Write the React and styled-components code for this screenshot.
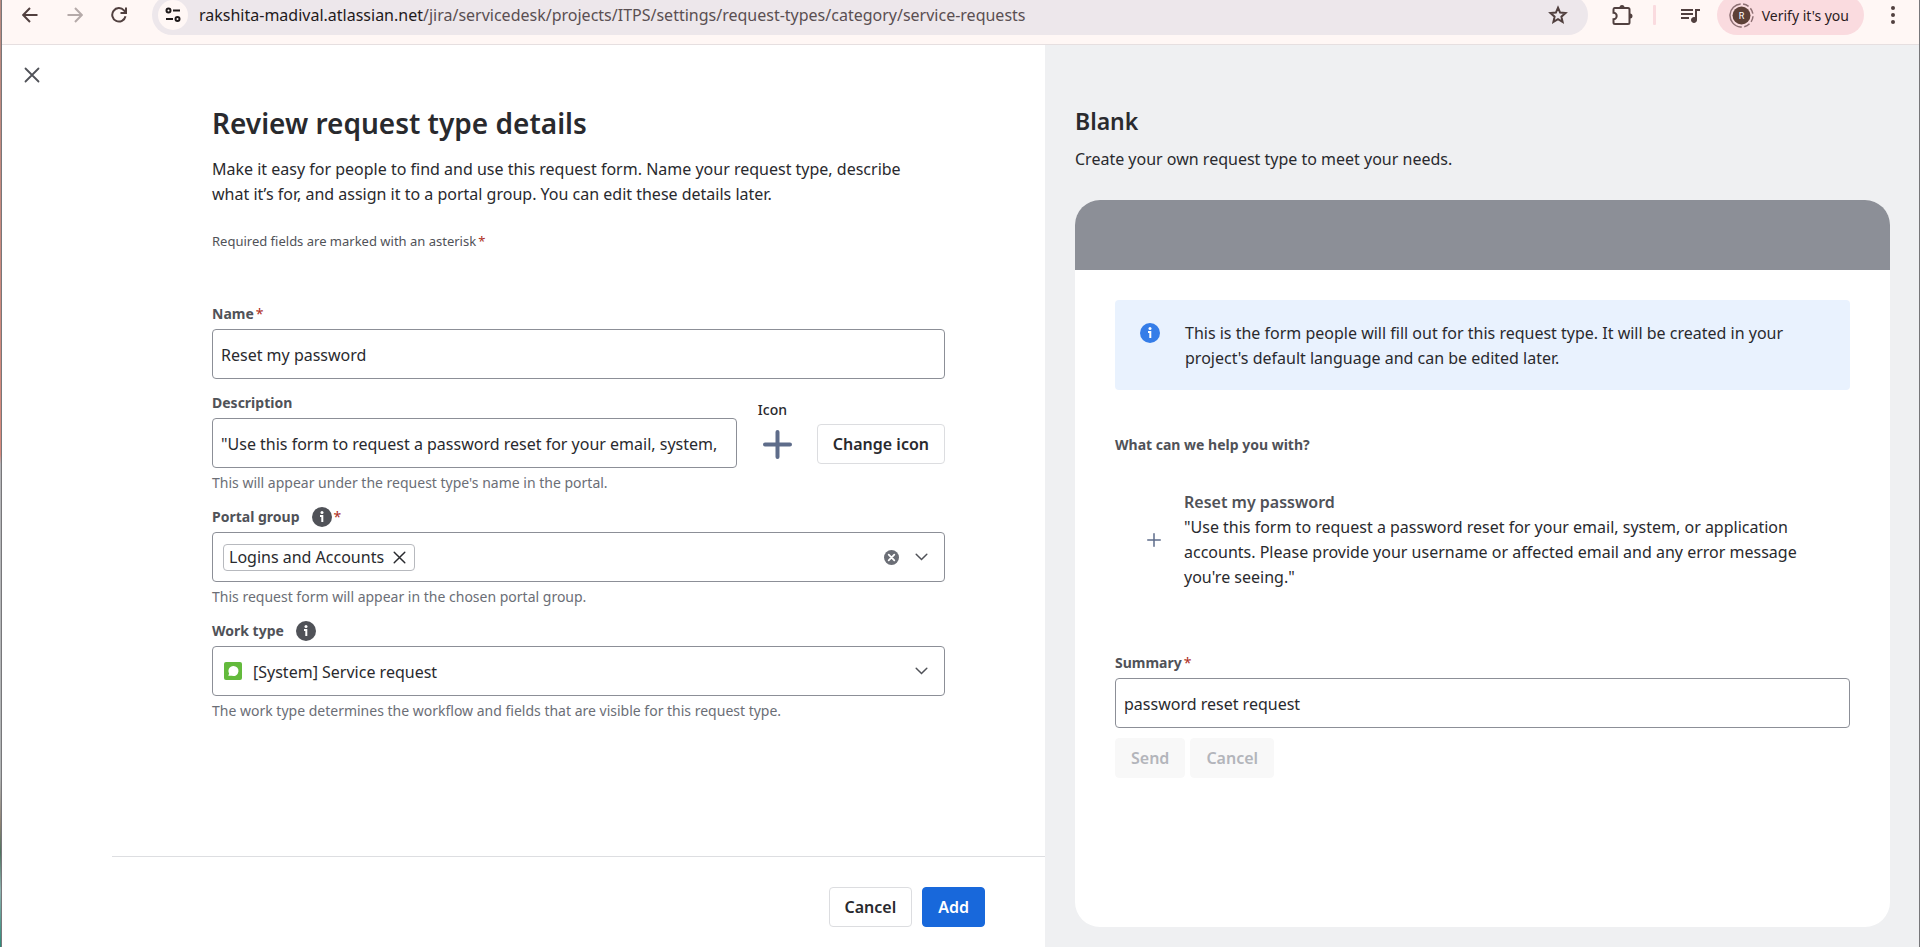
import React, { useState } from "react";
import styled, { createGlobalStyle, css } from "styled-components";

const GlobalStyle = createGlobalStyle`
  *, *::before, *::after { box-sizing: border-box; }
  html, body, #root { height: 100%; }
  body {
    margin: 0;
    color: #292a2e;
    font: 400 16px/25px "Noto Sans", "Open Sans", sans-serif;
  }
  button, input, select { font: inherit; color: inherit; }
  h1, h2, p { margin: 0; }
  svg { display: block; flex: none; }
`;

/* ---------- window frame ---------- */

const Desktop = styled.div`
  min-height: 100%;
  display: flex;
  padding-left: 1px;
  background: linear-gradient(#b98a80 0%, #d8897c 48%, #b5b5b8 49%, #b0b3b4 82%, #8f8272 87%, #4f7560 90%, #8fb3b1 94%, #2c8a78 100%);
`;

const Window = styled.div`
  flex: 1;
  min-width: 0;
  display: flex;
  flex-direction: column;
  border: solid #77777a;
  border-width: 0 1px;
  background: #fff;
  overflow: hidden;
`;

const Toolbar = styled.header`
  display: flex;
  align-items: center;
  height: 45px;
  padding: 0 0 14px 1px;
  border-bottom: 1px solid #e6dfe0;
  background: #fff7f5;
  color: #51403f;
`;

const IconButton = styled.button`
  flex: none;
  display: grid;
  place-items: center;
  width: ${(p) => p.$size || 46}px;
  height: ${(p) => p.$height || 30}px;
  padding: 0;
  border: 0;
  background: none;
  color: ${(p) => p.$color || "inherit"};
`;

const AddressBar = styled.div`
  flex: 1;
  display: flex;
  align-items: center;
  height: 40px;
  margin: 0 8px 0 7px;
  padding: 0 7px 0 6px;
  border-radius: 20px;
  background: #ede7eb;
`;

const SiteInfo = styled(IconButton)`
  border-radius: 50%;
  background: #fff7f5;
  color: #1f1a1b;
`;

const Address = styled.div`
  flex: 1;
  padding-left: 11px;
  color: #5a4f52;
  white-space: nowrap;
`;

const Host = styled.span`
  color: #1f1a1b;
`;

const Divider = styled.span`
  width: 3px;
  height: 20px;
  margin: 0 11px 0 5px;
  border-radius: 1px;
  background: #fadbdf;
`;

const ProfileButton = styled.button`
  display: flex;
  align-items: center;
  gap: 8px;
  height: 40px;
  margin: 0 3px 0 4px;
  padding: 0 15px 0 12px;
  border: 0;
  border-radius: 20px;
  background: #fadbdf;
  color: #2b1b1e;
  font-size: 14px;
  white-space: nowrap;
`;

/* ---------- page panels ---------- */

const Columns = styled.main`
  flex: 1;
  display: grid;
  grid-template-columns: 1043fr 874fr;
`;

const EditPanel = styled.section`
  display: grid;
  grid-template-columns: 110px 1fr;
  min-width: 0;
`;

const CloseCell = styled.div`
  padding: 15px;
`;

const EditBody = styled.div`
  display: flex;
  flex-direction: column;
  min-width: 0;
`;

const Form = styled.form`
  flex: 1;
  display: flex;
  flex-direction: column;
  padding: 61px 100px 30px;
`;

const Title = styled.h1`
  font-size: 28px;
  line-height: 35px;
  font-weight: 600;
`;

const Intro = styled.p`
  max-width: 720px;
  margin-top: 16px;
`;

const RequiredNote = styled.p`
  margin: 24px 0 53px;
  color: #505258;
  font-size: 13px;
  line-height: 20px;
`;

const Star = styled.span`
  margin-left: 2px;
  color: #ae2e24;
  font-weight: 400;
`;

const Fields = styled.div`
  display: flex;
  flex-direction: column;
  gap: 14px;
`;

const Field = styled.div`
  flex: 1;
  min-width: 0;
`;

const LabelRow = styled.div`
  display: flex;
  align-items: center;
  height: 20px;
  margin-bottom: 5px;
  color: #505258;
  font-size: 14px;
  line-height: 20px;
  font-weight: 700;
`;

const InfoDot = styled.span`
  margin-left: 12px;
`;

const boxStyle = css`
  width: 100%;
  height: 50px;
  border: 1px solid #8c8f97;
  border-radius: 4px;
  background: #fff;
`;

const TextInput = styled.input`
  ${boxStyle}
  padding: 2px 16px 0 8px;
`;

const Help = styled.p`
  margin-top: 5px;
  color: #6b6e76;
  font-size: 14px;
  line-height: 20px;
`;

const DescriptionRow = styled.div`
  display: flex;
  gap: 21px;
`;

const IconPicker = styled.div`
  padding-top: 7px;
`;

const IconCaption = styled.div`
  margin-bottom: 4px;
  font-size: 14px;
  line-height: 20px;
  font-weight: 500;
`;

const IconPickerRow = styled.div`
  display: flex;
  gap: 20px;
`;

const IconPreview = styled.span`
  display: grid;
  place-items: center;
  width: 39px;
  height: 40px;
`;

const Button = styled.button`
  height: 40px;
  padding: 0 15px;
  border: 1px solid ${(p) => (p.$primary ? "#1868db" : "#dcdde0")};
  border-radius: 4px;
  background: ${(p) => (p.$primary ? "#1868db" : "#fff")};
  color: ${(p) => (p.$primary ? "#fff" : "#292a2e")};
  font-weight: 600;
  white-space: nowrap;

  &:disabled {
    border-color: #f8f8f8;
    background: #f8f8f8;
    color: #b3b5bb;
  }
`;

const TagBox = styled.div`
  ${boxStyle}
  display: flex;
  align-items: center;
  padding: 0 8px 0 10px;
`;

const Tag = styled.span`
  display: flex;
  align-items: center;
  height: 27px;
  padding: 0 0 0 5px;
  border: 1px solid #b7b9be;
  border-radius: 4px;
  white-space: nowrap;
`;

const TagSearch = styled.input`
  flex: 1;
  min-width: 0;
  padding: 0 4px;
  border: 0;
  outline: 0;
  background: none;
`;

const SelectWrap = styled.div`
  position: relative;
`;

const Select = styled.select`
  ${boxStyle}
  appearance: none;
  padding: 2px 40px 0;
`;

const SelectIcon = styled.span`
  position: absolute;
  top: 16px;
  left: 12px;
  pointer-events: none;
`;

const SelectArrow = styled.span`
  position: absolute;
  top: 10px;
  right: 9px;
  display: grid;
  place-items: center;
  width: 30px;
  height: 30px;
  color: #505258;
  pointer-events: none;
`;

const Footer = styled.footer`
  display: flex;
  justify-content: flex-end;
  gap: 10px;
  padding: 30px 60px 20px;
  border-top: 1px solid #dddee1;
`;

/* ---------- preview ---------- */

const Preview = styled.aside`
  display: flex;
  flex-direction: column;
  min-width: 0;
  padding: 61px 29px 20px 30px;
  background: #eff0f2;
`;

const PreviewTitle = styled.h2`
  font-size: 23px;
  line-height: 30px;
  font-weight: 600;
`;

const PreviewText = styled.p`
  margin: 11px 0 28px;
`;

const Card = styled.div`
  flex: 1;
  border-radius: 25px;
  background: #fff;
  overflow: hidden;
`;

const CardBanner = styled.div`
  height: 70px;
  background: #8c8f97;
`;

const CardBody = styled.div`
  padding: 30px 40px;
`;

const Notice = styled.div`
  display: flex;
  gap: 25px;
  padding: 21px 25px 19px;
  border-radius: 4px;
  background: #e9f2fe;
`;

const NoticeIcon = styled.span`
  padding-top: 2px;
`;

const Question = styled.p`
  margin: 45px 0 35px;
  color: #505258;
  font-size: 14px;
  line-height: 20px;
  font-weight: 700;
`;

const RequestType = styled.div`
  display: flex;
  align-items: center;
  gap: 23px;
  margin-bottom: 63px;
  padding: 0 30px 0 32px;
`;

const RequestName = styled.div`
  color: #505258;
  font-weight: 600;
`;

const Actions = styled.div`
  display: flex;
  gap: 5px;
  margin-top: 10px;
`;

/* ---------- icons ---------- */

const stroke = { fill: "none", stroke: "currentColor" };

const BackIcon = () => (
  <svg width="16" height="16" viewBox="0 0 16 16" {...stroke} strokeWidth="2">
    <path d="M15.500 8H1.500M8 1L1.200 8L8 15" />
  </svg>
);
const ForwardIcon = () => (
  <svg width="16" height="16" viewBox="0 0 16 16" {...stroke} strokeWidth="2">
    <path d="M.5 8h14M8 1l6.800 7L8 15" />
  </svg>
);
const ReloadIcon = () => (
  <svg width="16" height="16" viewBox="0 0 16 16" {...stroke} strokeWidth="2">
    <path d="M14.500 9.200A6.700 6.700 0 1 1 13 3.400L14.800 5.600M15 .5V6H9.500" />
  </svg>
);
const TuneIcon = () => (
  <svg width="16" height="16" viewBox="0 0 16 16" {...stroke} strokeWidth="2">
    <circle cx="3.500" cy="3.500" r="2" />
    <circle cx="12.500" cy="12" r="2" />
    <path d="M8 3.500h7M1 12h7" />
  </svg>
);
const StarIcon = () => (
  <svg width="20" height="20" viewBox="0 0 20 20" {...stroke} strokeWidth="2">
    <path d="M10 2.700l2.100 4.900 5.400.5-4.100 3.600 1.200 5.200L10 14.100l-4.600 2.800 1.200-5.200L2.500 8.100l5.400-.5z" />
  </svg>
);
const PuzzleIcon = () => (
  <svg width="22" height="22" viewBox="0 0 22 22" {...stroke} strokeWidth="2">
    <path d="M3.500 4h13.500q1.500 0 1.500 1.500v13q0 1.500-1.500 1.500H4q-1.500 0-1.500-1.500v-3.300a3 3 0 0 0 0-6.400V5.500Q2.500 4 3.500 4z" />
    <path d="M8.500 3.500a2.500 2.500 0 0 1 5 0zM19 9.500a2.500 2.500 0 0 1 0 5z" fill="currentColor" stroke="none" />
  </svg>
);
const QueueIcon = () => (
  <svg width="24" height="24" viewBox="0 0 24 24" fill="currentColor">
    <path d="M15 6H3v2h12V6zm0 4H3v2h12v-2zM3 16h8v-2H3v2zM17 6v8.180c-.31-.11-.65-.18-1-.18-1.660 0-3 1.340-3 3s1.340 3 3 3 3-1.340 3-3V8h3V6h-5z" />
  </svg>
);
const Avatar = () => (
  <svg width="25" height="25" viewBox="0 0 25 25">
    <circle cx="12.500" cy="12.500" r="11.500" fill="none" stroke="#8d6f73" strokeWidth="1.500" strokeDasharray="34 2.500 6 2.500 6 2.500 6 2.500 6 2.500" transform="rotate(95 12.500 12.500)" />
    <circle cx="12.500" cy="12.500" r="9" fill="#5d4037" />
    <text x="12.500" y="16" textAnchor="middle" fill="#fff" fontFamily="Roboto, sans-serif" fontSize="9">R</text>
  </svg>
);
const MoreIcon = () => (
  <svg width="4" height="18" viewBox="0 0 4 18" fill="currentColor">
    <circle cx="2" cy="2" r="2" />
    <circle cx="2" cy="9" r="2" />
    <circle cx="2" cy="16" r="2" />
  </svg>
);
const CrossIcon = ({ size = 16, weight = 1.8 }) => (
  <svg width={size} height={size} viewBox="0 0 16 16" {...stroke} strokeWidth={weight} strokeLinecap="round">
    <path d="M1.500 1.500l13 13M14.500 1.500l-13 13" />
  </svg>
);
const PlusIcon = ({ size, weight }) => (
  <svg width={size} height={size} viewBox={`0 0 ${size} ${size}`} fill="none" stroke="#5e6c8a" strokeWidth={weight} strokeLinecap="round">
    <path d={`M${size / 2} ${weight / 2}V${size - weight / 2}M${weight / 2} ${size / 2}H${size - weight / 2}`} />
  </svg>
);
const InfoIcon = ({ color }) => (
  <svg width="20" height="20" viewBox="0 0 20 20" role="img" aria-label="Information">
    <circle cx="10" cy="10" r="10" fill={color} />
    <circle cx="10" cy="5.500" r="1.500" fill="#fff" />
    <path d="M8 9h2.300v6" fill="none" stroke="#fff" strokeWidth="2" />
  </svg>
);
const ChevronIcon = () => (
  <svg width="13" height="8" viewBox="0 0 13 8" {...stroke} strokeWidth="1.500" strokeLinecap="round">
    <path d="M1.200 1.200L6.500 6.500l5.300-5.300" />
  </svg>
);
const ClearIcon = () => (
  <svg width="15" height="15" viewBox="0 0 15 15">
    <circle cx="7.500" cy="7.500" r="7.500" fill="#6b6e76" />
    <path d="M4.700 4.700l5.600 5.600M10.300 4.700l-5.600 5.600" stroke="#fff" strokeWidth="1.800" strokeLinecap="round" />
  </svg>
);
const ServiceIcon = () => (
  <svg width="18" height="18" viewBox="0 0 18 18">
    <rect width="18" height="18" rx="2" fill="#63ba3c" />
    <path d="M9.300 4a5 5 0 1 1-1.200 9.800H4.300l.8-2.300A5 5 0 0 1 9.300 4z" fill="#fff" />
  </svg>
);

const DESCRIPTION =
  "\"Use this form to request a password reset for your email, system, or application accounts. Please provide your username or affected email and any error message you're seeing.\"";

export default function App() {
  const [name, setName] = useState("Reset my password");
  const [description, setDescription] = useState(DESCRIPTION);
  const [summary, setSummary] = useState("password reset request");

  return (
    <Desktop>
      <GlobalStyle />
      <Window>
        <Toolbar>
          <IconButton $size={54} aria-label="Back"><BackIcon /></IconButton>
          <IconButton $size={36} $color="#b5aaa9" aria-label="Forward"><ForwardIcon /></IconButton>
          <IconButton $size={52} aria-label="Reload"><ReloadIcon /></IconButton>
          <AddressBar>
            <SiteInfo $size={30} aria-label="Site information"><TuneIcon /></SiteInfo>
            <Address>
              <Host>rakshita-madival.atlassian.net</Host>/jira/servicedesk/projects/ITPS/settings/request-types/category/service-requests
            </Address>
            <IconButton aria-label="Bookmark"><StarIcon /></IconButton>
          </AddressBar>
          <IconButton $size={52} aria-label="Extensions"><PuzzleIcon /></IconButton>
          <Divider />
          <IconButton aria-label="Media controls"><QueueIcon /></IconButton>
          <ProfileButton><Avatar />Verify it's you</ProfileButton>
          <IconButton $size={52} aria-label="Menu"><MoreIcon /></IconButton>
        </Toolbar>

        <Columns>
          <EditPanel>
            <CloseCell>
              <IconButton $size={30} $color="#505258" aria-label="Close"><CrossIcon /></IconButton>
            </CloseCell>
            <EditBody>
              <Form id="details">
                <Title>Review request type details</Title>
                <Intro>
                  Make it easy for people to find and use this request form. Name your request type, describe what it’s for, and assign it to a portal group. You can edit these details later.
                </Intro>
                <RequiredNote>Required fields are marked with an asterisk<Star>*</Star></RequiredNote>

                <Fields>
                  <Field>
                    <LabelRow><label htmlFor="name">Name</label><Star>*</Star></LabelRow>
                    <TextInput id="name" value={name} onChange={(e) => setName(e.target.value)} />
                  </Field>
                  <DescriptionRow>
                    <Field>
                      <LabelRow><label htmlFor="description">Description</label></LabelRow>
                      <TextInput id="description" value={description} onChange={(e) => setDescription(e.target.value)} />
                      <Help>This will appear under the request type's name in the portal.</Help>
                    </Field>
                    <IconPicker>
                      <IconCaption>Icon</IconCaption>
                      <IconPickerRow>
                        <IconPreview><PlusIcon size={29} weight={4} /></IconPreview>
                        <Button type="button">Change icon</Button>
                      </IconPickerRow>
                    </IconPicker>
                  </DescriptionRow>
                  <Field>
                    <LabelRow>
                      <label htmlFor="portal-group">Portal group</label>
                      <InfoDot><InfoIcon color="#505258" /></InfoDot>
                      <Star>*</Star>
                    </LabelRow>
                    <TagBox>
                      <Tag>
                        Logins and Accounts
                        <IconButton type="button" $size={30} $height={24} aria-label="Remove Logins and Accounts"><CrossIcon size={13} /></IconButton>
                      </Tag>
                      <TagSearch id="portal-group" />
                      <IconButton type="button" $size={30} aria-label="Clear"><ClearIcon /></IconButton>
                      <IconButton type="button" $size={30} $color="#505258" aria-label="Open list"><ChevronIcon /></IconButton>
                    </TagBox>
                    <Help>This request form will appear in the chosen portal group.</Help>
                  </Field>
                  <Field>
                    <LabelRow>
                      <label htmlFor="work-type">Work type</label>
                      <InfoDot><InfoIcon color="#505258" /></InfoDot>
                    </LabelRow>
                    <SelectWrap>
                      <Select id="work-type">
                        <option>[System] Service request</option>
                      </Select>
                      <SelectIcon><ServiceIcon /></SelectIcon>
                      <SelectArrow><ChevronIcon /></SelectArrow>
                    </SelectWrap>
                    <Help>The work type determines the workflow and fields that are visible for this request type.</Help>
                  </Field>
                </Fields>
              </Form>
              <Footer>
                <Button type="button">Cancel</Button>
                <Button type="submit" form="details" $primary>Add</Button>
              </Footer>
            </EditBody>
          </EditPanel>

          <Preview>
            <PreviewTitle>Blank</PreviewTitle>
            <PreviewText>Create your own request type to meet your needs.</PreviewText>
            <Card>
              <CardBanner />
              <CardBody>
                <Notice>
                  <NoticeIcon><InfoIcon color="#357de8" /></NoticeIcon>
                  <p>This is the form people will fill out for this request type. It will be created in your project's default language and can be edited later.</p>
                </Notice>
                <Question>What can we help you with?</Question>
                <RequestType>
                  <PlusIcon size={14} weight={1.5} />
                  <div>
                    <RequestName>{name}</RequestName>
                    <p>{description}</p>
                  </div>
                </RequestType>
                <LabelRow><label htmlFor="summary">Summary</label><Star>*</Star></LabelRow>
                <TextInput id="summary" value={summary} onChange={(e) => setSummary(e.target.value)} />
                <Actions>
                  <Button type="button" disabled>Send</Button>
                  <Button type="button" disabled>Cancel</Button>
                </Actions>
              </CardBody>
            </Card>
          </Preview>
        </Columns>
      </Window>
    </Desktop>
  );
}
